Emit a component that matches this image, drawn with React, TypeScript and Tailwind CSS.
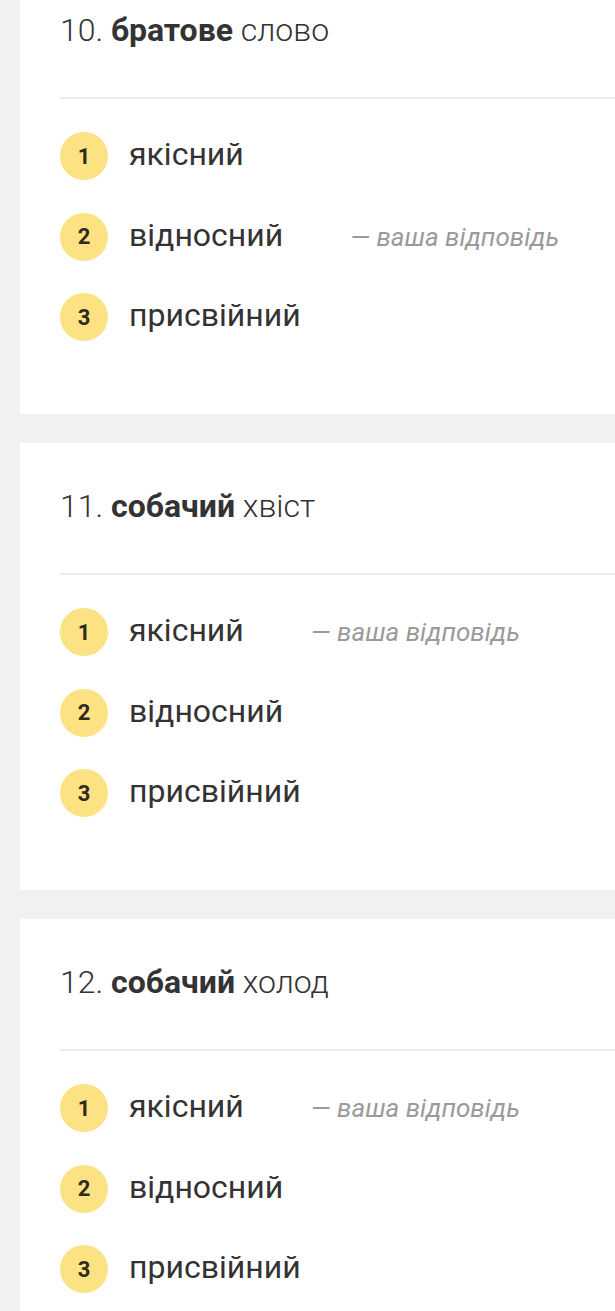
const questions = [
  { n: 10, bold: "братове", rest: "слово", answer: 1 },
  { n: 11, bold: "собачий", rest: "хвіст", answer: 0 },
  { n: 12, bold: "собачий", rest: "холод", answer: 0 },
];

const options = ["якісний", "відносний", "присвійний"];

function Question({ n, bold, rest, answer }: { n: number; bold: string; rest: string; answer: number }) {
  return (
    <div className="bg-white pl-[40px] pt-[43px] pb-[75px] h-[447px]">
      <h2 className="text-[32px] leading-[40px] font-light text-[#333] whitespace-nowrap">
        {n}. <b className="font-bold">{bold}</b> {rest}
      </h2>
      <div className="mt-[47px] h-[2px] bg-[#ececec]" />
      <ul className="mt-[33px] flex flex-col gap-[32.5px]">
        {options.map((o, i) => (
          <li key={o} className="flex items-center h-[48px]">
            <span className="w-[48px] h-[48px] rounded-full bg-[#fde283] flex items-center justify-center text-[22px] font-bold text-[#2f2a1c]">
              {i + 1}
            </span>
            <span className="ml-[21px] text-[32px] leading-none -mt-[4px] text-[#333]">{o}</span>
            {i === answer && (
              <span className="ml-[67px] text-[26px] leading-none italic text-[#9a9a9a]">— ваша відповідь</span>
            )}
          </li>
        ))}
      </ul>
    </div>
  );
}

export default function App() {
  return (
    <div
      className="min-h-[1311px] bg-[#f1f1f1] pl-[20px] overflow-hidden"
      style={{ fontFamily: "Roboto, 'Noto Sans', sans-serif" }}
    >
      <div className="-mt-[33px] flex flex-col gap-[29px]">
        {questions.map((q) => (
          <Question key={q.n} {...q} />
        ))}
      </div>
    </div>
  );
}
